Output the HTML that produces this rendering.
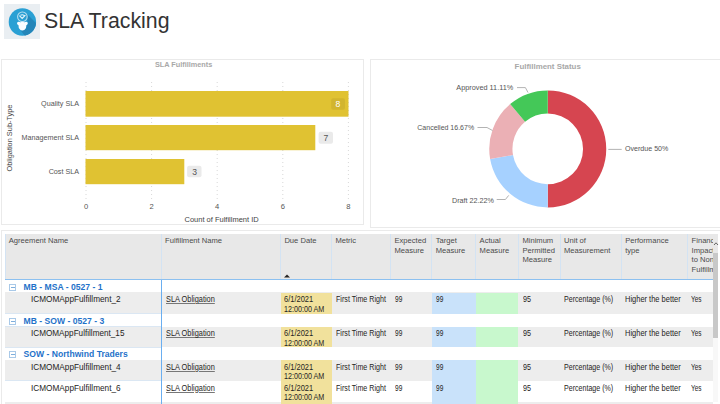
<!DOCTYPE html>
<html><head><meta charset="utf-8">
<style>
*{margin:0;padding:0;box-sizing:border-box}
html,body{width:720px;height:404px;overflow:hidden;background:#fff;font-family:"Liberation Sans",sans-serif;color:#252423}
.a{position:absolute;white-space:nowrap}
.card{position:absolute;border:1px solid #eaeaea;background:#fff}
.t{position:absolute;white-space:nowrap;line-height:1}
</style></head><body>
<!-- header -->
<div class="a" style="left:4px;top:4px;width:36px;height:35px;background:#e9eef2"></div>
<svg class="a" style="left:0;top:0" width="44" height="44" viewBox="0 0 44 44">
  <defs><clipPath id="cc"><circle cx="22.4" cy="22" r="13.7"/></clipPath></defs>
  <circle cx="22.4" cy="22" r="13.7" fill="#2aa0d4"/>
  <g clip-path="url(#cc)"><path d="M26.5 13.5 L46 33 L33 46 L21 31 L25.5 29 L27.8 23 Z" fill="#2486b9"/></g>
  <circle cx="22.4" cy="16.8" r="4.8" fill="none" stroke="#b8def0" stroke-width="1.1"/>
  <path d="M19.4 15.6 L22.2 18.4 L25.4 15.2 M20.5 15.2 Q22.5 14.2 24.3 15.6" fill="none" stroke="#e8f5fb" stroke-width="1.1"/>
  <path d="M17 23.5 Q17 21.6 18.8 21.8 L20.4 22.2 Q22.4 21.2 24.4 22.2 L26 21.8 Q27.9 21.6 27.8 23.5 Q27.6 24.8 26.3 25.3 L26 28 Q24.5 30.6 22.4 30.6 Q20.3 30.6 18.8 28 L18.5 25.3 Q17.2 24.8 17 23.5 Z" fill="#fbfdff"/>
</svg>
<div class="t" style="left:44px;top:10.8px;font-size:21.3px;color:#333">SLA Tracking</div>

<!-- left card -->
<div class="card" style="left:1px;top:59px;width:363px;height:166px"></div>
<div class="t" style="left:155px;top:61.3px;font-size:7.3px;font-weight:bold;color:#a8a8a8">SLA Fulfillments</div>

<svg class="a" style="left:0;top:0" width="365" height="230" viewBox="0 0 365 230">
  <g stroke="#d8d8d8" stroke-width="1" stroke-dasharray="1 3">
    <line x1="86" y1="82" x2="86" y2="200"/>
    <line x1="151.6" y1="82" x2="151.6" y2="200"/>
    <line x1="217.2" y1="82" x2="217.2" y2="200"/>
    <line x1="282.8" y1="82" x2="282.8" y2="200"/>
    <line x1="348.4" y1="82" x2="348.4" y2="200"/>
  </g>
  <rect x="85.5" y="91" width="263" height="25.7" fill="#e0c232"/>
  <rect x="85.5" y="125" width="229.8" height="25.2" fill="#e0c232"/>
  <rect x="85.5" y="159" width="98.8" height="25.2" fill="#e0c232"/>
  <rect x="331.2" y="98.3" width="13.8" height="11.4" rx="2" fill="#d2b52e"/>
  <rect x="318.6" y="131.8" width="14.4" height="11.9" rx="2" fill="#eaeaea"/>
  <rect x="187.1" y="165.8" width="14.4" height="11.4" rx="2" fill="#eaeaea"/>
</svg>
<div class="t" style="left:335.4px;top:99.9px;font-size:8.6px;color:#fff">8</div>
<div class="t" style="left:323.4px;top:133.6px;font-size:8.6px;color:#555">7</div>
<div class="t" style="left:192.2px;top:167.6px;font-size:8.6px;color:#555">3</div>
<div class="t" style="right:641px;top:100px;font-size:7.2px;color:#555">Quality SLA</div>
<div class="t" style="right:641px;top:134px;font-size:7.2px;color:#555">Management SLA</div>
<div class="t" style="right:641px;top:168px;font-size:7.2px;color:#555">Cost SLA</div>
<div class="t" style="left:9.5px;top:138px;font-size:7.4px;color:#444;transform:translate(-50%,-50%) rotate(-90deg)">Obligation Sub-Type</div>
<div class="t" style="left:86px;top:203px;font-size:7.6px;color:#555;transform:translateX(-50%)">0</div>
<div class="t" style="left:151.6px;top:203px;font-size:7.6px;color:#555;transform:translateX(-50%)">2</div>
<div class="t" style="left:217.2px;top:203px;font-size:7.6px;color:#555;transform:translateX(-50%)">4</div>
<div class="t" style="left:282.8px;top:203px;font-size:7.6px;color:#555;transform:translateX(-50%)">6</div>
<div class="t" style="left:348.4px;top:203px;font-size:7.6px;color:#555;transform:translateX(-50%)">8</div>
<div class="t" style="left:184.5px;top:215.5px;font-size:7.5px;color:#444">Count of Fulfillment ID</div>

<!-- right card -->
<div class="card" style="left:370px;top:59px;width:352px;height:169px"></div>
<div class="t" style="left:514.6px;top:62.8px;font-size:7.9px;font-weight:bold;color:#a8a8a8">Fulfillment Status</div>

<svg class="a" style="left:0;top:0" width="720" height="230" viewBox="0 0 720 230">
<path d="M547.75 90.40 A58.5 58.5 0 0 1 547.75 207.40 L547.75 184.20 A35.3 35.3 0 0 0 547.75 113.60 Z" fill="#d64550"/>
<path d="M547.75 207.40 A58.5 58.5 0 0 1 490.14 159.06 L512.99 155.03 A35.3 35.3 0 0 0 547.75 184.20 Z" fill="#a6d1ff"/>
<path d="M490.14 159.06 A58.5 58.5 0 0 1 510.15 104.09 L525.06 121.86 A35.3 35.3 0 0 0 512.99 155.03 Z" fill="#ebb0b5"/>
<path d="M510.15 104.09 A58.5 58.5 0 0 1 547.75 90.40 L547.75 113.60 A35.3 35.3 0 0 0 525.06 121.86 Z" fill="#44c858"/>
<g fill="none" stroke="#a0a0a0" stroke-width="0.8">
<path d="M517 87.6 L525.4 87.6 L528 92.5"/>
<path d="M477.5 127.5 L487 127.5 L492.5 130.5"/>
<path d="M496.7 199.5 L505.4 199.5 L508.7 195.4"/>
<path d="M608.3 149.4 L621.7 149.4"/>
</g>
</svg>
<div class="t" style="left:456.3px;top:84px;font-size:7.3px;color:#555">Approved 11.11%</div>
<div class="t" style="left:417.3px;top:123.5px;font-size:7.0px;color:#555">Cancelled 16.67%</div>
<div class="t" style="left:452px;top:196.5px;font-size:7.2px;color:#555">Draft 22.22%</div>
<div class="t" style="left:625px;top:145.5px;font-size:7.1px;color:#555">Overdue 50%</div>

<!-- table card -->
<div class="card" style="left:1px;top:230px;width:722px;height:180px"></div>
<!--T-->
<div class="a" style="left:5.00px;top:234.00px;width:713.00px;height:45.40px;background:#e8e8e8"></div>
<div class="a" style="left:4.50px;top:234.00px;width:1.00px;height:45.40px;background:#d3e3f3"></div>
<div class="a" style="left:160.80px;top:234.00px;width:1.00px;height:45.40px;background:#d3e3f3"></div>
<div class="a" style="left:280.10px;top:234.00px;width:1.00px;height:45.40px;background:#d3e3f3"></div>
<div class="a" style="left:331.10px;top:234.00px;width:1.00px;height:45.40px;background:#d3e3f3"></div>
<div class="a" style="left:390.20px;top:234.00px;width:1.00px;height:45.40px;background:#d3e3f3"></div>
<div class="a" style="left:431.40px;top:234.00px;width:1.00px;height:45.40px;background:#d3e3f3"></div>
<div class="a" style="left:475.30px;top:234.00px;width:1.00px;height:45.40px;background:#d3e3f3"></div>
<div class="a" style="left:518.10px;top:234.00px;width:1.00px;height:45.40px;background:#d3e3f3"></div>
<div class="a" style="left:559.70px;top:234.00px;width:1.00px;height:45.40px;background:#d3e3f3"></div>
<div class="a" style="left:620.90px;top:234.00px;width:1.00px;height:45.40px;background:#d3e3f3"></div>
<div class="a" style="left:687.30px;top:234.00px;width:1.00px;height:45.40px;background:#d3e3f3"></div>
<div class="a" style="left:5.00px;top:279.00px;width:707.60px;height:1.20px;background:#8cc0f0"></div>
<div class="a" style="left:0;top:0;width:713px;height:280px;overflow:hidden">
<div class="t" style="left:8.80px;top:237.20px;font-size:7.6px;color:#4a4a4a;">Agreement Name</div>
<div class="t" style="left:165.10px;top:237.20px;font-size:7.6px;color:#4a4a4a;">Fulfillment Name</div>
<div class="t" style="left:284.40px;top:237.20px;font-size:7.6px;color:#4a4a4a;">Due Date</div>
<div class="t" style="left:335.40px;top:237.20px;font-size:7.6px;color:#4a4a4a;">Metric</div>
<div class="t" style="left:394.50px;top:237.20px;font-size:7.6px;color:#4a4a4a;">Expected</div>
<div class="t" style="left:394.50px;top:246.80px;font-size:7.6px;color:#4a4a4a;">Measure</div>
<div class="t" style="left:435.70px;top:237.20px;font-size:7.6px;color:#4a4a4a;">Target</div>
<div class="t" style="left:435.70px;top:246.80px;font-size:7.6px;color:#4a4a4a;">Measure</div>
<div class="t" style="left:479.60px;top:237.20px;font-size:7.6px;color:#4a4a4a;">Actual</div>
<div class="t" style="left:479.60px;top:246.80px;font-size:7.6px;color:#4a4a4a;">Measure</div>
<div class="t" style="left:522.40px;top:237.20px;font-size:7.6px;color:#4a4a4a;">Minimum</div>
<div class="t" style="left:522.40px;top:246.80px;font-size:7.6px;color:#4a4a4a;">Permitted</div>
<div class="t" style="left:522.40px;top:256.40px;font-size:7.6px;color:#4a4a4a;">Measure</div>
<div class="t" style="left:564.00px;top:237.20px;font-size:7.6px;color:#4a4a4a;">Unit of</div>
<div class="t" style="left:564.00px;top:246.80px;font-size:7.6px;color:#4a4a4a;">Measurement</div>
<div class="t" style="left:625.20px;top:237.20px;font-size:7.6px;color:#4a4a4a;">Performance</div>
<div class="t" style="left:625.20px;top:246.80px;font-size:7.6px;color:#4a4a4a;">type</div>
<div class="t" style="left:691.60px;top:237.20px;font-size:7.6px;color:#4a4a4a;">Financial</div>
<div class="t" style="left:691.60px;top:246.80px;font-size:7.6px;color:#4a4a4a;">Impact</div>
<div class="t" style="left:691.60px;top:256.40px;font-size:7.6px;color:#4a4a4a;">to Non</div>
<div class="t" style="left:691.60px;top:266.00px;font-size:7.6px;color:#4a4a4a;">Fulfillment</div>
</div>
<svg class="a" style="left:283px;top:273px" width="8" height="5" viewBox="0 0 8 5"><path d="M1 4.5 L4 1.5 L7 4.5 Z" fill="#252423"/></svg>
<div class="a" style="left:9.2px;top:284.20px;width:7px;height:7px;border:1px solid #a9c9e8"></div>
<div class="a" style="left:10.8px;top:287.30px;width:3.9px;height:1px;background:#7eaedc"></div>
<div class="t" style="left:23.60px;top:283.10px;font-size:8.6px;color:#1f72c9;font-weight:bold">MB - MSA - 0527 - 1</div>
<div class="a" style="left:5.00px;top:291.70px;width:156.00px;height:1.00px;background:#dbe7f3"></div>
<div class="a" style="left:5.00px;top:292.20px;width:707.60px;height:21.70px;background:#ededed"></div>
<div class="a" style="left:280.90px;top:292.50px;width:51.10px;height:21.40px;background:#f1e19c"></div>
<div class="a" style="left:432.00px;top:292.50px;width:43.80px;height:21.40px;background:#c9e2fa"></div>
<div class="a" style="left:475.80px;top:292.50px;width:42.70px;height:21.40px;background:#c8f8cd"></div>
<div class="t" style="left:30.80px;top:296.00px;font-size:8.2px;color:#252423;transform:scaleX(1.005);transform-origin:0 0;">ICMOMAppFulfillment_2</div>
<div class="t" style="left:165.80px;top:296.00px;font-size:8.2px;color:#252423;transform:scaleX(0.901);transform-origin:0 0;text-decoration:underline;text-decoration-color:#777;text-underline-offset:1px">SLA Obligation</div>
<div class="t" style="left:283.80px;top:296.00px;font-size:8.2px;color:#252423;transform:scaleX(0.915);transform-origin:0 0;">6/1/2021</div>
<div class="t" style="left:283.80px;top:305.60px;font-size:8.2px;color:#252423;transform:scaleX(0.877);transform-origin:0 0;">12:00:00 AM</div>
<div class="t" style="left:335.80px;top:296.00px;font-size:8.2px;color:#252423;transform:scaleX(0.871);transform-origin:0 0;">First Time Right</div>
<div class="t" style="left:394.70px;top:296.00px;font-size:8.2px;color:#252423;transform:scaleX(0.800);transform-origin:0 0;">99</div>
<div class="t" style="left:435.70px;top:296.00px;font-size:8.2px;color:#252423;transform:scaleX(0.800);transform-origin:0 0;">99</div>
<div class="t" style="left:522.80px;top:296.00px;font-size:8.2px;color:#252423;transform:scaleX(0.877);transform-origin:0 0;">95</div>
<div class="t" style="left:564.40px;top:296.00px;font-size:8.2px;color:#252423;transform:scaleX(0.864);transform-origin:0 0;">Percentage (%)</div>
<div class="t" style="left:625.30px;top:296.00px;font-size:8.2px;color:#252423;transform:scaleX(0.914);transform-origin:0 0;">Higher the better</div>
<div class="t" style="left:690.60px;top:296.00px;font-size:8.2px;color:#252423;transform:scaleX(0.785);transform-origin:0 0;">Yes</div>
<div class="a" style="left:5.00px;top:313.40px;width:156.00px;height:1.00px;background:#dbe7f3"></div>
<div class="a" style="left:9.2px;top:317.90px;width:7px;height:7px;border:1px solid #a9c9e8"></div>
<div class="a" style="left:10.8px;top:321.00px;width:3.9px;height:1px;background:#7eaedc"></div>
<div class="t" style="left:23.60px;top:316.80px;font-size:8.6px;color:#1f72c9;font-weight:bold">MB - SOW - 0527 - 3</div>
<div class="a" style="left:5.00px;top:326.00px;width:156.00px;height:1.00px;background:#dbe7f3"></div>
<div class="a" style="left:5.00px;top:326.50px;width:707.60px;height:20.80px;background:#ededed"></div>
<div class="a" style="left:280.90px;top:326.80px;width:51.10px;height:20.50px;background:#f1e19c"></div>
<div class="a" style="left:432.00px;top:326.80px;width:43.80px;height:20.50px;background:#c9e2fa"></div>
<div class="a" style="left:475.80px;top:326.80px;width:42.70px;height:20.50px;background:#c8f8cd"></div>
<div class="t" style="left:30.80px;top:330.30px;font-size:8.2px;color:#252423;transform:scaleX(0.997);transform-origin:0 0;">ICMOMAppFulfillment_15</div>
<div class="t" style="left:165.80px;top:330.30px;font-size:8.2px;color:#252423;transform:scaleX(0.901);transform-origin:0 0;text-decoration:underline;text-decoration-color:#777;text-underline-offset:1px">SLA Obligation</div>
<div class="t" style="left:283.80px;top:330.30px;font-size:8.2px;color:#252423;transform:scaleX(0.915);transform-origin:0 0;">6/1/2021</div>
<div class="t" style="left:283.80px;top:339.90px;font-size:8.2px;color:#252423;transform:scaleX(0.877);transform-origin:0 0;">12:00:00 AM</div>
<div class="t" style="left:335.80px;top:330.30px;font-size:8.2px;color:#252423;transform:scaleX(0.871);transform-origin:0 0;">First Time Right</div>
<div class="t" style="left:394.70px;top:330.30px;font-size:8.2px;color:#252423;transform:scaleX(0.800);transform-origin:0 0;">99</div>
<div class="t" style="left:435.70px;top:330.30px;font-size:8.2px;color:#252423;transform:scaleX(0.800);transform-origin:0 0;">99</div>
<div class="t" style="left:522.80px;top:330.30px;font-size:8.2px;color:#252423;transform:scaleX(0.877);transform-origin:0 0;">95</div>
<div class="t" style="left:564.40px;top:330.30px;font-size:8.2px;color:#252423;transform:scaleX(0.864);transform-origin:0 0;">Percentage (%)</div>
<div class="t" style="left:625.30px;top:330.30px;font-size:8.2px;color:#252423;transform:scaleX(0.914);transform-origin:0 0;">Higher the better</div>
<div class="t" style="left:690.60px;top:330.30px;font-size:8.2px;color:#252423;transform:scaleX(0.785);transform-origin:0 0;">Yes</div>
<div class="a" style="left:5.00px;top:346.80px;width:156.00px;height:1.00px;background:#dbe7f3"></div>
<div class="a" style="left:9.2px;top:351.30px;width:7px;height:7px;border:1px solid #a9c9e8"></div>
<div class="a" style="left:10.8px;top:354.40px;width:3.9px;height:1px;background:#7eaedc"></div>
<div class="t" style="left:23.60px;top:350.20px;font-size:8.6px;color:#1f72c9;font-weight:bold">SOW - Northwind Traders</div>
<div class="a" style="left:5.00px;top:359.50px;width:156.00px;height:1.00px;background:#dbe7f3"></div>
<div class="a" style="left:5.00px;top:360.00px;width:707.60px;height:20.80px;background:#ededed"></div>
<div class="a" style="left:280.90px;top:360.30px;width:51.10px;height:20.50px;background:#f1e19c"></div>
<div class="a" style="left:432.00px;top:360.30px;width:43.80px;height:20.50px;background:#c9e2fa"></div>
<div class="a" style="left:475.80px;top:360.30px;width:42.70px;height:20.50px;background:#c8f8cd"></div>
<div class="t" style="left:30.80px;top:363.80px;font-size:8.2px;color:#252423;transform:scaleX(1.005);transform-origin:0 0;">ICMOMAppFulfillment_4</div>
<div class="t" style="left:165.80px;top:363.80px;font-size:8.2px;color:#252423;transform:scaleX(0.901);transform-origin:0 0;text-decoration:underline;text-decoration-color:#777;text-underline-offset:1px">SLA Obligation</div>
<div class="t" style="left:283.80px;top:363.80px;font-size:8.2px;color:#252423;transform:scaleX(0.915);transform-origin:0 0;">6/1/2021</div>
<div class="t" style="left:283.80px;top:373.40px;font-size:8.2px;color:#252423;transform:scaleX(0.877);transform-origin:0 0;">12:00:00 AM</div>
<div class="t" style="left:335.80px;top:363.80px;font-size:8.2px;color:#252423;transform:scaleX(0.871);transform-origin:0 0;">First Time Right</div>
<div class="t" style="left:394.70px;top:363.80px;font-size:8.2px;color:#252423;transform:scaleX(0.800);transform-origin:0 0;">99</div>
<div class="t" style="left:435.70px;top:363.80px;font-size:8.2px;color:#252423;transform:scaleX(0.800);transform-origin:0 0;">99</div>
<div class="t" style="left:522.80px;top:363.80px;font-size:8.2px;color:#252423;transform:scaleX(0.877);transform-origin:0 0;">95</div>
<div class="t" style="left:564.40px;top:363.80px;font-size:8.2px;color:#252423;transform:scaleX(0.864);transform-origin:0 0;">Percentage (%)</div>
<div class="t" style="left:625.30px;top:363.80px;font-size:8.2px;color:#252423;transform:scaleX(0.914);transform-origin:0 0;">Higher the better</div>
<div class="t" style="left:690.60px;top:363.80px;font-size:8.2px;color:#252423;transform:scaleX(0.785);transform-origin:0 0;">Yes</div>
<div class="a" style="left:5.00px;top:380.30px;width:156.00px;height:1.00px;background:#dbe7f3"></div>
<div class="a" style="left:280.90px;top:381.10px;width:51.10px;height:20.90px;background:#f1e19c"></div>
<div class="a" style="left:432.00px;top:381.10px;width:43.80px;height:20.90px;background:#c9e2fa"></div>
<div class="a" style="left:475.80px;top:381.10px;width:42.70px;height:20.90px;background:#c8f8cd"></div>
<div class="t" style="left:30.80px;top:384.60px;font-size:8.2px;color:#252423;transform:scaleX(1.005);transform-origin:0 0;">ICMOMAppFulfillment_6</div>
<div class="t" style="left:165.80px;top:384.60px;font-size:8.2px;color:#252423;transform:scaleX(0.901);transform-origin:0 0;text-decoration:underline;text-decoration-color:#777;text-underline-offset:1px">SLA Obligation</div>
<div class="t" style="left:283.80px;top:384.60px;font-size:8.2px;color:#252423;transform:scaleX(0.915);transform-origin:0 0;">6/1/2021</div>
<div class="t" style="left:283.80px;top:394.20px;font-size:8.2px;color:#252423;transform:scaleX(0.877);transform-origin:0 0;">12:00:00 AM</div>
<div class="t" style="left:335.80px;top:384.60px;font-size:8.2px;color:#252423;transform:scaleX(0.871);transform-origin:0 0;">First Time Right</div>
<div class="t" style="left:394.70px;top:384.60px;font-size:8.2px;color:#252423;transform:scaleX(0.800);transform-origin:0 0;">99</div>
<div class="t" style="left:435.70px;top:384.60px;font-size:8.2px;color:#252423;transform:scaleX(0.800);transform-origin:0 0;">99</div>
<div class="t" style="left:522.80px;top:384.60px;font-size:8.2px;color:#252423;transform:scaleX(0.877);transform-origin:0 0;">95</div>
<div class="t" style="left:564.40px;top:384.60px;font-size:8.2px;color:#252423;transform:scaleX(0.864);transform-origin:0 0;">Percentage (%)</div>
<div class="t" style="left:625.30px;top:384.60px;font-size:8.2px;color:#252423;transform:scaleX(0.914);transform-origin:0 0;">Higher the better</div>
<div class="t" style="left:690.60px;top:384.60px;font-size:8.2px;color:#252423;transform:scaleX(0.785);transform-origin:0 0;">Yes</div>
<div class="a" style="left:5.00px;top:401.50px;width:156.00px;height:1.00px;background:#dbe7f3"></div>
<div class="a" style="left:5.00px;top:402.00px;width:707.60px;height:21.00px;background:#ededed"></div>
<div class="a" style="left:280.90px;top:402.30px;width:51.10px;height:20.70px;background:#f1e19c"></div>
<div class="a" style="left:432.00px;top:402.30px;width:43.80px;height:20.70px;background:#c9e2fa"></div>
<div class="a" style="left:475.80px;top:402.30px;width:42.70px;height:20.70px;background:#c8f8cd"></div>
<div class="t" style="left:30.80px;top:405.80px;font-size:8.2px;color:#252423;transform:scaleX(1.048);transform-origin:0 0;">ICMOMAppFulfillment_7</div>
<div class="t" style="left:165.80px;top:405.80px;font-size:8.2px;color:#252423;transform:scaleX(0.901);transform-origin:0 0;text-decoration:underline;text-decoration-color:#777;text-underline-offset:1px">SLA Obligation</div>
<div class="t" style="left:283.80px;top:405.80px;font-size:8.2px;color:#252423;transform:scaleX(0.915);transform-origin:0 0;">6/1/2021</div>
<div class="t" style="left:283.80px;top:415.40px;font-size:8.2px;color:#252423;transform:scaleX(0.877);transform-origin:0 0;">12:00:00 AM</div>
<div class="t" style="left:335.80px;top:405.80px;font-size:8.2px;color:#252423;transform:scaleX(0.871);transform-origin:0 0;">First Time Right</div>
<div class="t" style="left:394.70px;top:405.80px;font-size:8.2px;color:#252423;transform:scaleX(0.800);transform-origin:0 0;">99</div>
<div class="t" style="left:435.70px;top:405.80px;font-size:8.2px;color:#252423;transform:scaleX(0.800);transform-origin:0 0;">99</div>
<div class="t" style="left:522.80px;top:405.80px;font-size:8.2px;color:#252423;transform:scaleX(0.877);transform-origin:0 0;">95</div>
<div class="t" style="left:564.40px;top:405.80px;font-size:8.2px;color:#252423;transform:scaleX(0.864);transform-origin:0 0;">Percentage (%)</div>
<div class="t" style="left:625.30px;top:405.80px;font-size:8.2px;color:#252423;transform:scaleX(0.914);transform-origin:0 0;">Higher the better</div>
<div class="t" style="left:690.60px;top:405.80px;font-size:8.2px;color:#252423;transform:scaleX(0.785);transform-origin:0 0;">Yes</div>
<div class="a" style="left:5.00px;top:422.50px;width:156.00px;height:1.00px;background:#dbe7f3"></div>
<div class="a" style="left:161.00px;top:280.20px;width:1.20px;height:124.00px;background:#6aaef0"></div>
<div class="a" style="left:712.90px;top:280.20px;width:5.20px;height:122.00px;background:#f8f8f8"></div>
<div class="a" style="left:712.80px;top:253.00px;width:5.20px;height:85.00px;background:#c8c8c8"></div>
<svg class="a" style="left:713px;top:241px" width="6" height="5" viewBox="0 0 6 5"><path d="M1 4 L3 1.8 L5 4" fill="none" stroke="#444" stroke-width="0.8"/></svg>
<!--/T-->
</body></html>
